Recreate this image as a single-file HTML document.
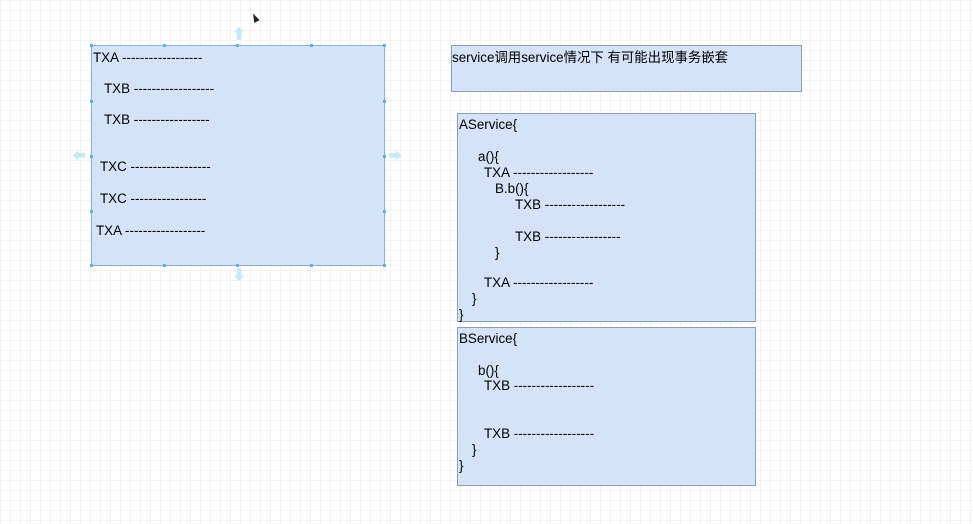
<!DOCTYPE html>
<html><head><meta charset="utf-8"><style>
body{margin:0;width:973px;height:524px;overflow:hidden;position:relative;background-color:#fff;
background-image:linear-gradient(#f2f2f2 1px,transparent 1px),linear-gradient(90deg,#f2f2f2 1px,transparent 1px);
background-size:10px 10px;font-family:"Liberation Sans","Noto Sans CJK SC",sans-serif;font-size:13.4px;color:#000}
.box{position:absolute;background:#d4e3f7;border:1px solid #8a9fb8;box-sizing:border-box}
.t{position:absolute;white-space:pre;line-height:16px}
.h{position:absolute;width:3px;height:3px;background:#5fb3e0}
.ar{position:absolute;color:#c8e8f6;font-size:14px;line-height:14px}
</style></head><body>
<div class="box" style="left:91px;top:45px;width:294px;height:221px;border-color:#8fb0d8"></div>
<div class="h" style="left:90px;top:44px"></div><div class="h" style="left:163px;top:44px"></div><div class="h" style="left:236px;top:44px"></div><div class="h" style="left:310px;top:44px"></div><div class="h" style="left:383px;top:44px"></div>
<div class="h" style="left:90px;top:264px"></div><div class="h" style="left:163px;top:264px"></div><div class="h" style="left:236px;top:264px"></div><div class="h" style="left:310px;top:264px"></div><div class="h" style="left:383px;top:264px"></div>
<div class="h" style="left:90px;top:100px"></div><div class="h" style="left:90px;top:155px"></div><div class="h" style="left:90px;top:210px"></div>
<div class="h" style="left:383px;top:100px"></div><div class="h" style="left:383px;top:155px"></div><div class="h" style="left:383px;top:210px"></div>
<div class="ar" style="left:232px;top:27px">⬆</div><div class="ar" style="left:232px;top:268px">⬇</div>
<div class="ar" style="left:72px;top:149px">⬅</div><div class="ar" style="left:388px;top:149px">➡</div>
<div class="t" style="left:93px;top:50px">TXA ------------------</div>
<div class="t" style="left:104px;top:81px">TXB ------------------</div>
<div class="t" style="left:104px;top:112px">TXB -----------------</div>
<div class="t" style="left:100px;top:159px">TXC ------------------</div>
<div class="t" style="left:100px;top:191px">TXC -----------------</div>
<div class="t" style="left:96px;top:223px">TXA ------------------</div>

<div class="box" style="left:451px;top:45px;width:351px;height:47px"></div>
<div class="t" style="left:452px;top:50px">service调用service情况下 有可能出现事务嵌套</div>

<div class="box" style="left:457px;top:113px;width:299px;height:209px"></div>
<div class="t" style="left:459px;top:117px">AService{</div>
<div class="t" style="left:478px;top:149px">a(){</div>
<div class="t" style="left:484px;top:165px">TXA ------------------</div>
<div class="t" style="left:495px;top:181px">B.b(){</div>
<div class="t" style="left:515px;top:197px">TXB ------------------</div>
<div class="t" style="left:515px;top:229px">TXB -----------------</div>
<div class="t" style="left:495px;top:245px">}</div>
<div class="t" style="left:484px;top:275px">TXA ------------------</div>
<div class="t" style="left:472px;top:291px">}</div>
<div class="t" style="left:459px;top:307px">}</div>

<div class="box" style="left:457px;top:327px;width:299px;height:159px"></div>
<div class="t" style="left:459px;top:331px">BService{</div>
<div class="t" style="left:478px;top:363px">b(){</div>
<div class="t" style="left:484px;top:378px">TXB ------------------</div>
<div class="t" style="left:484px;top:426px">TXB ------------------</div>
<div class="t" style="left:472px;top:442px">}</div>
<div class="t" style="left:459px;top:458px">}</div>

<div style="position:absolute;left:252px;top:13px;width:0;height:0;border-left:3px solid transparent;border-right:3px solid transparent;border-bottom:9px solid #222;transform:rotate(-25deg)"></div>
</body></html>
